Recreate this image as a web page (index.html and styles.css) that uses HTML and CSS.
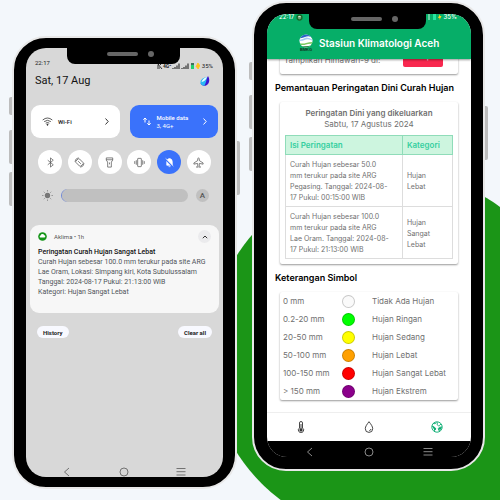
FILE: index.html
```html
<!DOCTYPE html>
<html lang="id">
<head>
<meta charset="utf-8">
<title>Aklima</title>
<meta name="viewport" content="width=device-width, initial-scale=1">
<link rel="stylesheet" href="styles.css">
</head>
<body>
<main class="scene">
  <section class="phone phone-left">
    <i class="key key-mute"></i><i class="key key-up"></i><i class="key key-down"></i><i class="key key-power"></i>
    <div class="notch"><span class="speaker"></span><span class="camera"></span></div>
    <div class="screen shade">
      <div class="status">
        <span>22:17</span>
        <span class="status-icons">
          <svg width="44" height="8" viewBox="0 0 44 8">
            <path d="M1 1l5 6M2 5V3l1.500-1.500L5 3M1 6h3" fill="none" stroke="#222" stroke-width=".9"/>
            <text x="7" y="6" class="net">4G⁺</text>
            <path d="M17 7V6M19 7V5M21 7V3.500M23 7V1.500M26 7V6M28 7V5M30 7V3.500M32 7V1.500" stroke="#222" stroke-width="1.100"/>
            <rect x="35" y="1" width="3" height="6" fill="#3f6f5a"/><rect x="35" y="3" width="3" height="4" fill="#20d070"/>
            <path d="M40 5l2-4 .5 2H44l-2 4-.5-2z" fill="#ffc31f" stroke="#ffc31f"/>
          </svg>
          <span>35%</span>
        </span>
      </div>
      <header class="date-row">
        <h1>Sat, 17 Aug</h1>
        <svg width="10" height="10" viewBox="0 0 10 10"><path d="M8 0C10 3 10 8 5.500 9.800 3 10 1 9 .5 7 4 7 6 4 8 0z" fill="#3b16d0"/><path d="M7 1C3 1.500 0 4 .5 7c.5 2 2.500 3 4 2.500C6 7 6.500 4 7 1z" fill="#28b8f5"/><path d="M7 .8C4 2 2 4 1.500 6 4 6 6 4 7 .8z" fill="#eafcff"/></svg>
      </header>
      <div class="tiles">
        <button class="tile">
          <svg class="tile-icon" width="11" height="9" viewBox="0 0 11 9" fill="none" stroke="#333" stroke-width=".8"><path d="M.7 3Q5.500-1 10.300 3M2.200 4.600Q5.500 2 8.800 4.600M3.700 6.200Q5.500 4.800 7.300 6.200"/><circle cx="5.500" cy="7.700" r=".6" fill="#333"/></svg>
          <span class="tile-text"><b>Wi-Fi</b></span>
          <svg width="4" height="7" viewBox="0 0 4 7" fill="none" stroke="#333"><path d="M.5.500l2.700 3-2.700 3"/></svg>
        </button>
        <button class="tile active">
          <svg class="tile-icon" width="11" height="9" viewBox="0 0 11 9" fill="none" stroke="#fff"><path d="M4 5.500V1M2.300 2.700L4 1l1.700 1.700M8 3.500V8M6.300 6.300L8 8l1.700-1.700"/></svg>
          <span class="tile-text"><b>Mobile data</b><span>3, 4G+</span></span>
          <svg width="4" height="7" viewBox="0 0 4 7" fill="none" stroke="#fff"><path d="M.5.500l2.700 3-2.700 3"/></svg>
        </button>
      </div>
      <div class="toggles">
        <button aria-label="Bluetooth"><svg viewBox="0 0 12 12"><path d="M3 3.500l6 5L6 11V1l3 2.500-6 5"/></svg></button>
        <button aria-label="Auto rotate"><svg viewBox="0 0 12 12"><rect x="3.300" y="2.200" width="5.400" height="7.600" rx="1" transform="rotate(-45 6 6)"/><path d="M1 5A5.200 5.200 0 0 1 5 .8M11 7A5.200 5.200 0 0 1 7 11.200M4.500 4.500l3 3"/></svg></button>
        <button aria-label="Flashlight"><svg viewBox="0 0 12 12"><path d="M2.500 1h7v2.500L8 5.500V11H4V5.500L2.500 3.500zM2.500 3h7M6 6v2"/></svg></button>
        <button aria-label="Vibrate"><svg viewBox="0 0 12 12"><rect x="4" y="1.500" width="4" height="9" rx=".5"/><path d="M2.500 3.500v5M.8 4.500v3M9.500 3.500v5M11.200 4.500v3"/></svg></button>
        <button class="active" aria-label="Mute"><svg viewBox="0 0 12 12"><path d="M3 9V5q0-2.800 3-3.300Q9 2.200 9 5v4zM5 10.500h2" fill="#fff"/><path class="slash" d="M2 2.800l8 8"/><path d="M1.800 1.500l8.400 8.400"/></svg></button>
        <button aria-label="Airplane mode"><svg viewBox="0 0 12 12"><path d="M6 .8q1 .5 1 3.200l4 2.500v1.300L7 7l-.3 2.500L8 10.500v.7l-2-.5-2 .5v-.7l1.300-1L5 7 1 7.800V6.500L5 4Q5 1.300 6 .8z"/></svg></button>
      </div>
      <div class="brightness">
        <svg width="11" height="11" viewBox="0 0 12 12"><circle cx="6" cy="6" r="2.900" fill="#777"/><path d="M6 .3v1.200M6 10.500v1.200M.3 6h1.200M10.500 6h1.200M2 2l.8.800M9.200 9.200l.8.800M10 2l-.8.800M2.800 9.200L2 10" stroke="#777"/></svg>
        <input type="range" min="0" max="100" value="0" aria-label="Brightness">
        <button>A</button>
      </div>
      <article class="notice">
        <div class="notice-head">
          <svg width="9" height="9" viewBox="0 0 9 9"><circle cx="4.500" cy="4.500" r="4.300" fill="#16961a"/><path d="M2.300 5.600a1.200 1.200 0 0 1 .3-2.200 2 2 0 0 1 3.700-.1 1.200 1.200 0 0 1 .2 2.300z" fill="#fff"/></svg>
          <span>Aklima • 1h</span>
          <button aria-label="Collapse"><svg width="6" height="4" viewBox="0 0 6 4" fill="none" stroke="#333"><path d="M.8 3.200L3 1l2.200 2.200"/></svg></button>
        </div>
        <h2>Peringatan Curah Hujan Sangat Lebat</h2>
        <p>Curah Hujan sebesar 100.0 mm terukur pada site ARG<br>Lae Oram, Lokasi: Simpang kiri, Kota Subulussalam<br>Tanggal: 2024-08-17 Pukul: 21:13:00 WIB<br>Kategori: Hujan Sangat Lebat</p>
      </article>
      <div class="actions"><button>History</button><button>Clear all</button></div>
      <nav class="sysnav">
        <button aria-label="Back"><svg viewBox="0 0 10 10"><path d="M7 1L2.500 5 7 9"/></svg></button>
        <button aria-label="Home"><svg viewBox="0 0 10 10"><circle cx="5" cy="5" r="4"/></svg></button>
        <button aria-label="Recents"><svg viewBox="0 0 10 10"><path d="M.5 1.500h9M.5 4.700h9M.5 8h9"/></svg></button>
      </nav>
    </div>
  </section>

  <section class="phone phone-right">
    <i class="key key-mute"></i><i class="key key-up"></i><i class="key key-down"></i><i class="key key-power"></i>
    <div class="notch"><span class="speaker"></span><span class="camera"></span></div>
    <div class="screen app">
      <header class="appbar">
        <div class="status">
          <span class="status-icons"><span>22:17</span><svg width="7" height="7" viewBox="0 0 7 7"><circle cx="3.500" cy="3.500" r="2.400" fill="#d9edcf" stroke="#176b2a" stroke-width="1.500"/><path d="M2 4h3" stroke="#176b2a"/></svg></span>
          <span class="status-icons"><svg width="14" height="7" viewBox="0 0 14 7"><path d="M1 0v6" stroke="#cdf5df"/><rect x="5" y="0" width="3" height="6" fill="#25e6a0"/><path d="M10 4l2-4v2h1.500l-2 4V4z" fill="#ffd21f"/></svg><span>35%</span></span>
        </div>
        <div class="brand">
          <svg width="14" height="18" viewBox="0 0 14 18"><defs><clipPath id="disc"><circle cx="7" cy="7" r="6.500"/></clipPath></defs><g clip-path="url(#disc)"><path d="M0 0h14v14H0z" fill="#fff"/><path d="M0 0h14v4Q10 1 6 3 3 4.500 0 4z" fill="#2b62c9"/><path d="M0 6q4-1 7-2.500Q10 3 14 6v1Q10 4.500 7 5.500 4 7 0 7z" fill="#a5cbf2"/><path d="M0 9q4 1 7 0t7-1v2q-4-.5-7 .5t-7 0z" fill="#7cc95e"/><path d="M0 12q7 1 14-1v3H0z" fill="#2b8a48"/></g><text x="7" y="17" class="logo-text">BMKG</text></svg>
          <h1>Stasiun Klimatologi Aceh</h1>
        </div>
      </header>
      <div class="content">
        <div class="card peek"><span>Tampilkan Himawari-9 di:</span><button>Tampil</button></div>
        <h2>Pemantauan Peringatan Dini Curah Hujan</h2>
        <div class="card warnings">
          <h3>Peringatan Dini yang dikeluarkan</h3>
          <p>Sabtu, 17 Agustus 2024</p>
          <table>
            <thead><tr><th class="main-col">Isi Peringatan</th><th>Kategori</th></tr></thead>
            <tbody>
              <tr><td>Curah Hujan sebesar 50.0<br>mm terukur pada site ARG<br>Pegasing. Tanggal: 2024-08-<br>17 Pukul: 00:15:00 WIB</td><td>Hujan<br>Lebat</td></tr>
              <tr><td>Curah Hujan sebesar 100.0<br>mm terukur pada site ARG<br>Lae Oram. Tanggal: 2024-08-<br>17 Pukul: 21:13:00 WIB</td><td>Hujan<br>Sangat<br>Lebat</td></tr>
            </tbody>
          </table>
        </div>
        <h2>Keterangan Simbol</h2>
        <ul class="card legend">
          <li><span>0 mm</span><i class="dot none"></i><span>Tidak Ada Hujan</span></li>
          <li><span>0.2-20 mm</span><i class="dot light"></i><span>Hujan Ringan</span></li>
          <li><span>20-50 mm</span><i class="dot medium"></i><span>Hujan Sedang</span></li>
          <li><span>50-100 mm</span><i class="dot heavy"></i><span>Hujan Lebat</span></li>
          <li><span>100-150 mm</span><i class="dot severe"></i><span>Hujan Sangat Lebat</span></li>
          <li><span>&gt; 150 mm</span><i class="dot extreme"></i><span>Hujan Ekstrem</span></li>
        </ul>
      </div>
      <nav class="tabs">
        <a href="#suhu" aria-label="Suhu"><svg viewBox="0 0 12 12"><path d="M4.500 7V2a1.500 1.500 0 0 1 3 0v5a2.600 2.600 0 1 1-3 0z"/><circle cx="6" cy="9" r="1.200" fill="currentColor"/><path d="M6 3v5"/></svg></a>
        <a href="#hujan" aria-label="Hujan"><svg viewBox="0 0 12 12"><path d="M6 .7C8 3.300 9.700 5.500 9.700 7.700a3.700 3.700 0 0 1-7.400 0C2.300 5.500 4 3.300 6 .7zM8 8a2 2 0 0 1-1.700 1.600"/></svg></a>
        <a href="#iklim" class="current" aria-label="Iklim"><svg viewBox="0 0 12 12"><circle cx="6" cy="6" r="5.200"/><path d="M2 2.500l2 .2 1.500-1.200M1 5l2.500 1.200L5 8l-1.500 1.200.3 1.500M6.500 1.500L6 3.500l1.500 1.300 1.200-.5L10 3M11 6L8.500 6.300 7.200 7.500l.6 2L9 10" /><path d="M1.200 5l2 1L5 8l-1.500 1.500zM7.500 7.300l1.500-1 2 .2-2 3z" fill="currentColor" stroke="none"/></svg></a>
      </nav>
      <nav class="sysnav">
        <button aria-label="Back"><svg viewBox="0 0 10 10"><path d="M7 1L2.500 5 7 9"/></svg></button>
        <button aria-label="Home"><svg viewBox="0 0 10 10"><circle cx="5" cy="5" r="4"/></svg></button>
        <button aria-label="Recents"><svg viewBox="0 0 10 10"><path d="M.5 1.500h9M.5 4.700h9M.5 8h9"/></svg></button>
      </nav>
    </div>
  </section>
</main>
</body>
</html>
```
FILE: styles.css
```css
* { box-sizing: border-box; }
body { margin: 0; background: #f3f7fb; font-family: Roboto, "Liberation Sans", sans-serif; }
h1, h2, h3, p, ul { margin: 0; padding: 0; }
button { border: 0; padding: 0; background: none; font: inherit; color: inherit; display: flex; align-items: center; justify-content: center; }
svg { display: block; flex: none; }

.scene { position: relative; display: flex; align-items: flex-start; gap: 15px; min-height: 100vh; padding: 1px 15px 0 12px; overflow: hidden; }
.scene::before { content: ""; position: absolute; left: 208px; top: 171px; width: 366px; height: 366px; border-radius: 50%; background: #1b9517; }

/* Phone shells */
.phone { position: relative; flex: 225 1 0; min-width: 0; display: flex; background: #000; border: 2px solid #e8e8e8; border-radius: 34px; }
.phone-left { margin-top: 35px; min-height: 453px; padding: 10px 12px; }
.phone-right { flex-grow: 233; min-height: 470px; padding: 11px 12px 12px 13px; }
.key { position: absolute; left: -5px; width: 3px; background: #bdbdbd; border-radius: 2px 0 0 2px; }
.key-mute { top: 59px; height: 18px; }
.key-up { top: 92px; height: 34px; }
.key-down { top: 134px; height: 34px; }
.key-power { left: auto; right: -5px; top: 103px; height: 54px; border-radius: 0 2px 2px 0; }
.notch { position: absolute; z-index: 2; top: 9px; left: 24%; width: 51%; height: 17px; background: #000; border-radius: 0 0 8px 8px; display: flex; align-items: flex-start; justify-content: center; gap: 10px; padding: 5px 0 0 14px; }
.speaker { width: 31px; height: 4px; border-radius: 2px; background: #666; }
.camera { width: 6px; height: 6px; margin-top: -1px; border-radius: 50%; background: #666; }
.screen { flex: 1; min-width: 0; display: flex; flex-direction: column; overflow: hidden; border-radius: 20px; }
.status { display: flex; justify-content: space-between; }
.status-icons { display: flex; align-items: center; gap: 2px; }
.net { font: 700 5px Roboto, sans-serif; fill: #222; }

/* Notification shade */
.shade { background: #d8d8d8; color: #222; }
.shade .status { padding: 11px 10px 0 9px; font-size: 6px; line-height: 8px; }
.shade .status-icons { margin-top: 3px; }
.date-row { display: flex; justify-content: space-between; align-items: center; padding: 4px 13px 0 9px; }
.date-row h1 { font-size: 11px; font-weight: 400; line-height: 14px; color: #111; }
.tiles { display: flex; gap: 10px; padding: 17px 5px 0; }
.tile { flex: 1; height: 33px; padding: 0 11px; border-radius: 9px; background: #fff; text-align: left; font-size: 6px; line-height: 8px; }
.tile-icon { margin-right: 5px; }
.tile-text { flex: 1; display: flex; flex-direction: column; }
.tile b { font-weight: 500; }
.tile.active { background: #3a72fb; color: #fff; }
.toggles { display: flex; justify-content: space-between; padding: 12px 12px 0; }
.toggles button { width: 24px; height: 24px; border-radius: 50%; background: #fff; }
.toggles .active { background: #3a72fb; }
.toggles svg { width: 11px; height: 11px; fill: none; stroke: #555; stroke-width: .8; }
.toggles .active svg { stroke: #fff; }
.toggles .active .slash { stroke: #3a72fb; stroke-width: 1.5; }
.brightness { display: flex; align-items: center; gap: 8px; padding: 15px 14px 0 16px; }
.brightness input { flex: 1; min-width: 0; appearance: none; height: 13px; margin: 0; border-radius: 7px; background: #c0c0c0; border-left: 1px solid #6d86d8; overflow: hidden; }
.brightness input::-webkit-slider-thumb { appearance: none; width: 1px; height: 13px; background: #c0c0c0; }
.brightness button { width: 13px; height: 13px; border-radius: 50%; background: #c0c0c0; font-size: 8px; font-weight: 500; color: #555; }
.notice { margin: 23px 4px 0; padding: 5px 8px 16px; border-radius: 9px; background: #f7f7f7; }
.notice-head { display: flex; align-items: center; gap: 7px; height: 13px; font-size: 6px; color: #555; }
.notice-head button { margin-left: auto; width: 13px; height: 13px; border-radius: 50%; background: #ebebed; }
.notice h2 { margin-top: 4px; font-size: 7px; line-height: 10px; font-weight: 500; color: #111; white-space: nowrap; }
.notice p { font-size: 7px; line-height: 10px; color: #50555a; white-space: nowrap; }
.actions { display: flex; justify-content: space-between; padding: 13px 11px 0; }
.actions button { height: 12px; padding: 0 6px; border-radius: 6px; background: #f8f9ff; font-size: 6px; font-weight: 700; }
.sysnav { display: flex; justify-content: space-between; }
.sysnav svg { width: 10px; height: 10px; fill: none; stroke: #666; stroke-width: .9; }
.shade .sysnav { margin-top: auto; padding: 0 37px 0 36px; }

/* Climate app */
.app { background: #fff; font-family: Inter, "Liberation Sans", sans-serif; color: #707070; font-size: 8px; line-height: 11px; }
.appbar { position: relative; z-index: 1; height: 45px; background: #06ae68; color: #fff; box-shadow: 0 1px 2px #0006; }
.app .status { height: 6px; padding: 0 14px 0 12px; align-items: center; font-size: 6px; font-weight: 500; line-height: 6px; }
.brand { display: flex; align-items: center; gap: 6px; padding: 14px 0 0 32px; }
.brand h1 { font-size: 10px; line-height: 18px; font-weight: 600; white-space: nowrap; }
.logo-text { font: 700 4px "Liberation Sans", sans-serif; text-anchor: middle; fill: #12351f; }
.content { padding: 0 13px; }
.card { border-radius: 2px; background: #fff; box-shadow: 0 1px 2px #0006; }
.peek { height: 24px; margin-top: -9px; padding: 0 15px 7px 4px; display: flex; justify-content: space-between; align-items: flex-end; }
.peek span { line-height: 14px; }
.peek button { width: 40px; height: 18px; padding-bottom: 4px; border-radius: 2px; background: #f8284f; color: #fff; }
.content h2 { margin-left: -5px; font-size: 9px; line-height: 12px; font-weight: 600; color: #000; white-space: nowrap; }
.peek + h2 { margin-top: 8px; }
.warnings { margin-top: 8px; padding: 6px 5px 5px; text-align: center; }
.warnings h3 { font-size: 8px; line-height: 11px; font-weight: 600; }
.warnings table { width: 100%; margin-top: 5px; border-collapse: collapse; text-align: left; }
.warnings th, .warnings td { padding: 4px 4px 3px; border: 1px solid #ddd; white-space: nowrap; }
.warnings td { font-size: 7px; }
.warnings th { background: #cdf5df; border-color: #8fdcb9; color: #35cfa0; font-weight: 600; }
.main-col { width: 70%; }
.warnings + h2 { margin-top: 8px; }
.legend { margin-top: 8px; list-style: none; }
.legend li { display: grid; grid-template-columns: 59px 30px 1fr; align-items: center; height: 18px; padding-left: 3px; white-space: nowrap; }
.dot { width: 13px; height: 13px; border-radius: 50%; border: 1px solid #0003; }
.none { background: #fafafa; }
.light { background: #0f0; }
.medium { background: #ff0; }
.heavy { background: #ffa000; }
.severe { background: #f00; }
.extreme { background: #8b008b; }
.tabs { margin-top: auto; height: 29px; border-top: 1px solid #eee; display: flex; align-items: center; justify-content: space-between; padding: 0 28px; }
.tabs a { color: #333; }
.tabs svg { width: 12px; height: 12px; fill: none; stroke: currentColor; stroke-width: .9; }
.tabs .current { color: #08ac70; }
.app .sysnav { background: #000; padding: 6px 38px 0; min-height: 16px; }
.app .sysnav svg { stroke: #999; }
```
